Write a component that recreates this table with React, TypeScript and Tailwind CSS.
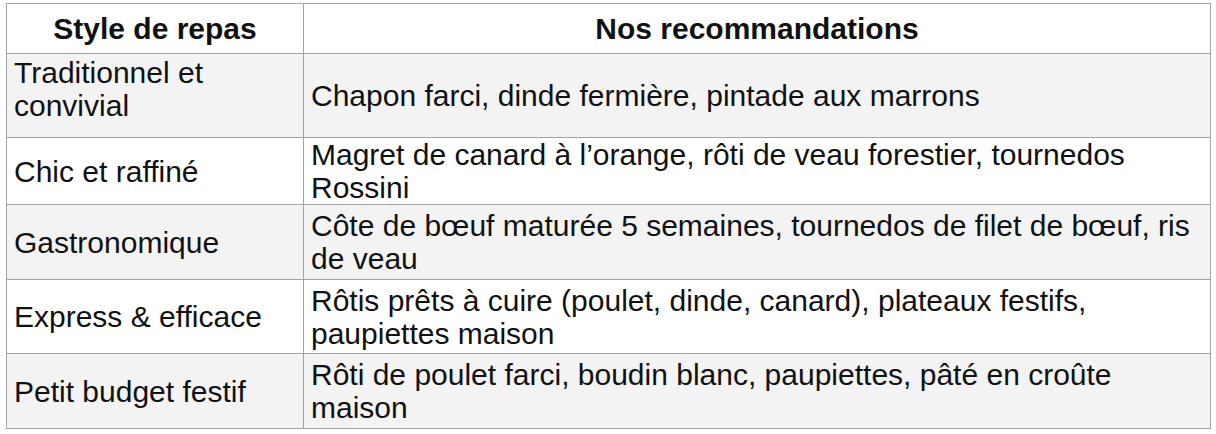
const rows = [
  { style: 'Traditionnel et convivial', reco: 'Chapon farci, dinde fermière, pintade aux marrons', h: 'h-[84px]', pad: 'pb-[14px]' },
  { style: 'Chic et raffiné', reco: 'Magret de canard à l’orange, rôti de veau forestier, tournedos Rossini', h: 'h-[66px]', pad: '' },
  { style: 'Gastronomique', reco: 'Côte de bœuf maturée 5 semaines, tournedos de filet de bœuf, ris de veau', h: 'h-[75px]', pad: '' },
  { style: 'Express & efficace', reco: 'Rôtis prêts à cuire (poulet, dinde, canard), plateaux festifs, paupiettes maison', h: 'h-[74px]', pad: '' },
  { style: 'Petit budget festif', reco: 'Rôti de poulet farci, boudin blanc, paupiettes, pâté en croûte maison', h: 'h-[75px]', pad: '' },
]

export default function App() {
  return (
    <div className="min-h-[434px] bg-white pl-[6px] pt-[3px] font-['Liberation_Sans',Arial,sans-serif] text-[30px] leading-[33px] text-[#111]">
      <table className="w-[1205px] table-fixed border-collapse">
        <colgroup>
          <col className="w-[297px]" />
          <col />
        </colgroup>
        <thead>
          {/* Header */}
          <tr className="h-[50px] bg-white">
            <th className="border border-[#a3a3a3] px-2 text-center align-middle font-bold">Style de repas</th>
            <th className="border border-[#a3a3a3] px-2 text-center align-middle font-bold">Nos recommandations</th>
          </tr>
        </thead>
        <tbody>
          {rows.map((row, i) => (
            <tr key={row.style} className={`${row.h} ${i % 2 === 0 ? 'bg-[#f3f3f3]' : 'bg-white'}`}>
              <td className={`border border-[#a3a3a3] px-[7px] align-middle ${row.pad}`}>{row.style}</td>
              <td className="border border-[#a3a3a3] px-[7px] align-middle">{row.reco}</td>
            </tr>
          ))}
        </tbody>
      </table>
    </div>
  )
}
